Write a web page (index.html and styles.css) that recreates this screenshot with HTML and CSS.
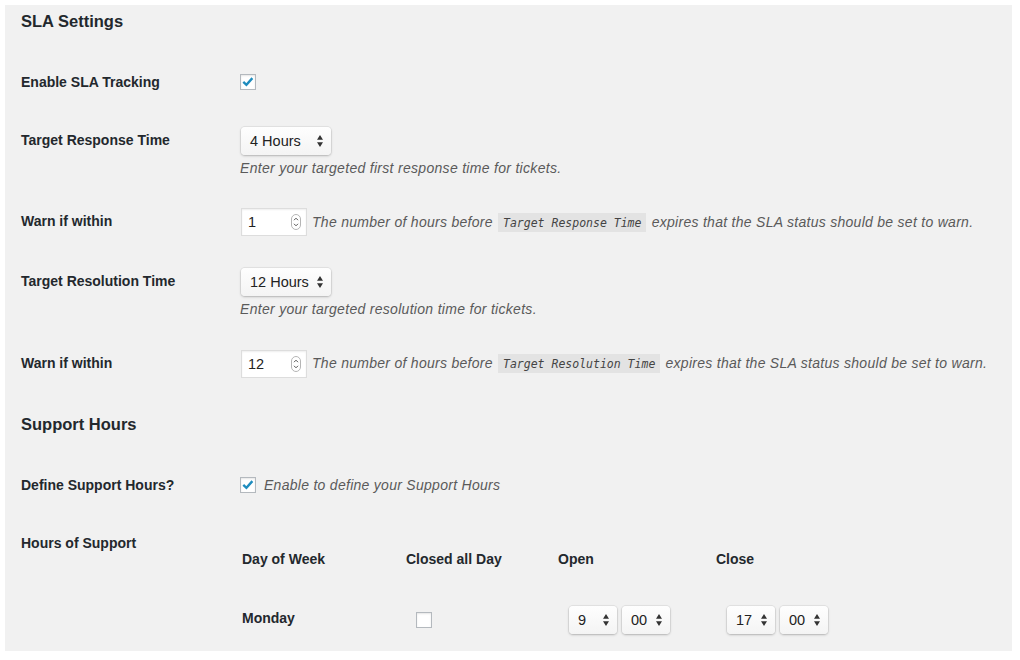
FILE: index.html
```html
<!DOCTYPE html>
<html lang="en">
<head>
<meta charset="utf-8">
<title>SLA Settings</title>
<link rel="stylesheet" href="styles.css">
</head>
<body>
<div class="page">
  <div class="panel">
    <h2 class="title">SLA Settings</h2>
    <table class="form-table">
      <tr>
        <th>Enable SLA Tracking</th>
        <td><span class="cb"><svg viewBox="0 0 16 16" width="14" height="14"><path d="M2.6 7.8 L6.2 11.2 L13 3.6" fill="none" stroke="#1e8cbe" stroke-width="2.7"/></svg></span></td>
      </tr>
      <tr>
        <th>Target Response Time</th>
        <td>
          <div class="select wide"><span>4 Hours</span><svg class="arrows" viewBox="0 0 6 12" width="6" height="12"><path d="M3 0 L6 4.8 H0 Z M0 7.2 H6 L3 12 Z" fill="#333"/></svg></div>
          <p class="desc">Enter your targeted first response time for tickets.</p>
        </td>
      </tr>
      <tr>
        <th>Warn if within</th>
        <td>
          <div class="inline-row">
            <div class="num"><span>1</span><svg viewBox="0 0 10 16" width="10" height="16"><rect x="0.5" y="0.5" width="9" height="15" rx="4.5" fill="#fff" stroke="#b5b5b5"/><path d="M3 6.2 L5 4.2 L7 6.2 M3 9.8 L5 11.8 L7 9.8" fill="none" stroke="#555" stroke-width="1"/></svg></div>
            <span class="desc-inline">The number of hours before <code>Target Response Time</code> expires that the SLA status should be set to warn.</span>
          </div>
        </td>
      </tr>
      <tr>
        <th>Target Resolution Time</th>
        <td>
          <div class="select wide"><span>12 Hours</span><svg class="arrows" viewBox="0 0 6 12" width="6" height="12"><path d="M3 0 L6 4.8 H0 Z M0 7.2 H6 L3 12 Z" fill="#333"/></svg></div>
          <p class="desc">Enter your targeted resolution time for tickets.</p>
        </td>
      </tr>
      <tr>
        <th>Warn if within</th>
        <td>
          <div class="inline-row">
            <div class="num"><span>12</span><svg viewBox="0 0 10 16" width="10" height="16"><rect x="0.5" y="0.5" width="9" height="15" rx="4.5" fill="#fff" stroke="#b5b5b5"/><path d="M3 6.2 L5 4.2 L7 6.2 M3 9.8 L5 11.8 L7 9.8" fill="none" stroke="#555" stroke-width="1"/></svg></div>
            <span class="desc-inline">The number of hours before <code>Target Resolution Time</code> expires that the SLA status should be set to warn.</span>
          </div>
        </td>
      </tr>
    </table>

    <h2 class="title second">Support Hours</h2>
    <table class="form-table">
      <tr>
        <th>Define Support Hours?</th>
        <td>
          <div class="inline-row check-row">
            <span class="cb"><svg viewBox="0 0 16 16" width="14" height="14"><path d="M2.6 7.8 L6.2 11.2 L13 3.6" fill="none" stroke="#1e8cbe" stroke-width="2.7"/></svg></span>
            <span class="desc-inline">Enable to define your Support Hours</span>
          </div>
        </td>
      </tr>
      <tr>
        <th>Hours of Support</th>
        <td class="top">
          <table class="days">
            <colgroup>
              <col class="c1"><col class="c2"><col class="c3"><col class="c4">
            </colgroup>
            <tr>
              <th>Day of Week</th>
              <th>Closed all Day</th>
              <th>Open</th>
              <th>Close</th>
            </tr>
            <tr class="day-row">
              <th>Monday</th>
              <td><span class="cb empty"></span></td>
              <td>
                <div class="time">
                  <div class="select small"><span>9</span><svg class="arrows" viewBox="0 0 6 12" width="6" height="12"><path d="M3 0 L6 4.8 H0 Z M0 7.2 H6 L3 12 Z" fill="#333"/></svg></div>
                  <div class="select small"><span>00</span><svg class="arrows" viewBox="0 0 6 12" width="6" height="12"><path d="M3 0 L6 4.8 H0 Z M0 7.2 H6 L3 12 Z" fill="#333"/></svg></div>
                </div>
              </td>
              <td>
                <div class="time">
                  <div class="select small"><span>17</span><svg class="arrows" viewBox="0 0 6 12" width="6" height="12"><path d="M3 0 L6 4.8 H0 Z M0 7.2 H6 L3 12 Z" fill="#333"/></svg></div>
                  <div class="select small"><span>00</span><svg class="arrows" viewBox="0 0 6 12" width="6" height="12"><path d="M3 0 L6 4.8 H0 Z M0 7.2 H6 L3 12 Z" fill="#333"/></svg></div>
                </div>
              </td>
            </tr>
          </table>
        </td>
      </tr>
    </table>
  </div>
</div>
</body>
</html>
```

FILE: styles.css
```css
html, body {
  margin: 0;
  background: #ffffff;
}

body {
  font-family: "Liberation Sans", Arial, sans-serif;
  color: #23282d;
}

.page {
  height: 660px;
  box-sizing: border-box;
  padding: 5px 8px 9px 5px;
}

.panel {
  height: 100%;
  box-sizing: border-box;
  background: #f1f1f1;
  padding: 0 8px 0 16px;
  overflow: hidden;
}

.title {
  font-size: 16.5px;
  line-height: 21px;
  font-weight: 700;
  margin: 6px 0 21px;
  color: #23282d;
}

.title.second {
  margin-top: 20px;
}

.form-table {
  border-collapse: collapse;
  width: 100%;
}

.form-table > tbody > tr > th {
  width: 200px;
  padding: 20px 10px 20px 0;
  text-align: left;
  vertical-align: top;
  font-size: 14px;
  line-height: 18.2px;
  font-weight: 700;
}

.form-table > tbody > tr > td {
  padding: 15px 10px;
  vertical-align: middle;
  font-size: 14px;
  line-height: 18.2px;
}

.form-table > tbody > tr > td.top {
  vertical-align: top;
}

.cb {
  display: flex;
  align-items: center;
  justify-content: center;
  width: 16px;
  height: 16px;
  box-sizing: border-box;
  margin-left: -1px;
  border: 1px solid #b4b9be;
  background: #ffffff;
  box-shadow: inset 0 1px 2px rgba(0, 0, 0, 0.1);
}

.select {
  display: flex;
  align-items: center;
  justify-content: space-between;
  height: 28px;
  box-sizing: border-box;
  padding: 0 8px 0 9px;
  border-radius: 4px;
  background: linear-gradient(#fefefe, #f4f4f4);
  box-shadow: 0 0 0 1px rgba(0, 0, 0, 0.05), 0 1px 2.5px rgba(0, 0, 0, 0.22);
  font-size: 14.5px;
  color: #222222;
}

.select.wide {
  width: 90px;
  margin: 1px 0;
}

.select.small {
  width: 48px;
}

.desc {
  margin: 4px 0 0 -1px;
  font-style: italic;
  font-size: 14px;
  letter-spacing: 0.3px;
  line-height: 18.2px;
  color: #5a5a5a;
  white-space: nowrap;
}

.inline-row {
  display: flex;
  align-items: center;
  gap: 5px;
}

.check-row {
  gap: 8px;
}

.num {
  display: flex;
  align-items: center;
  justify-content: space-between;
  width: 66px;
  height: 28px;
  margin: 1px 0;
  box-sizing: border-box;
  border: 1px solid #dddddd;
  background: #ffffff;
  box-shadow: inset 0 1px 2px rgba(0, 0, 0, 0.07);
  padding: 0 5px 0 6px;
  font-size: 14.5px;
  color: #222222;
}

.desc-inline {
  font-style: italic;
  font-size: 14px;
  letter-spacing: 0.28px;
  color: #5a5a5a;
  white-space: nowrap;
}

code {
  font-family: "DejaVu Sans Mono", "Liberation Mono", monospace;
  font-size: 11.5px;
  font-style: italic;
  letter-spacing: 0;
  color: #444444;
  background: #e3e3e3;
  padding: 3px 5px 2px;
  margin: 0 1px;
}

.days {
  border-collapse: collapse;
  table-layout: fixed;
  width: 674px;
  margin-left: 1px;
}

.days .c1 { width: 164px; }
.days .c2 { width: 152px; }
.days .c3 { width: 158px; }
.days .c4 { width: 200px; }

.days th {
  padding: 21px 10px 20px 0;
  text-align: left;
  vertical-align: top;
  font-size: 14px;
  line-height: 18.2px;
  font-weight: 700;
}

.days .day-row th {
  padding: 15px 10px 15px 0;
  vertical-align: middle;
}

.days .day-row td {
  padding: 18px 10px 15px 10px;
  vertical-align: middle;
}

.days .day-row .cb {
  margin-left: 0;
}

.time {
  display: flex;
  gap: 5px;
  margin-left: 1px;
}
```
